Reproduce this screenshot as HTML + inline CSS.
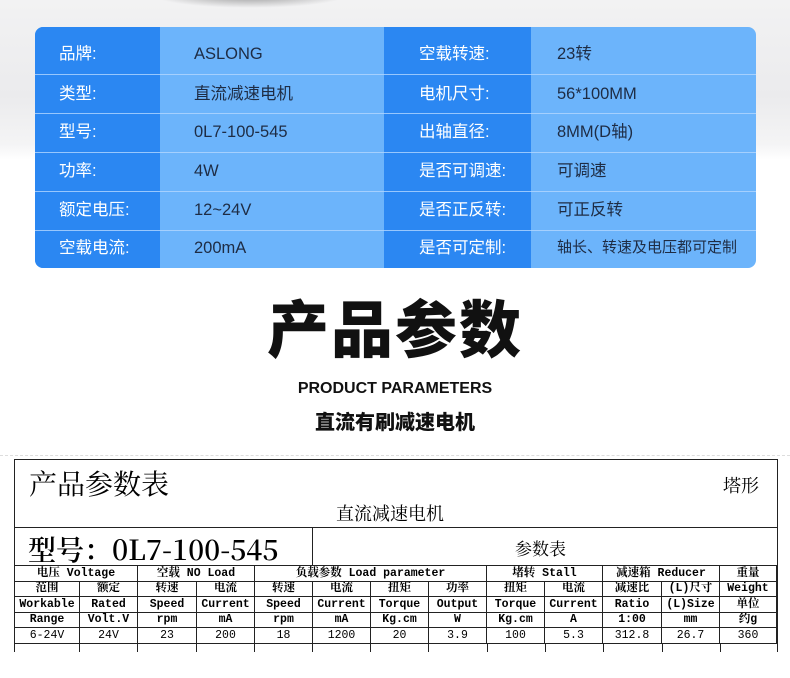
<!DOCTYPE html>
<html><head><meta charset="utf-8"><style>
*{margin:0;padding:0;box-sizing:border-box}
body{width:790px;height:678px;overflow:hidden;background:#fff;position:relative;font-family:"Liberation Sans","Noto Sans CJK SC",sans-serif}
.bg{position:absolute;left:0;top:0;width:790px;height:160px;background:linear-gradient(#f2f2f3,#ebebed 60%,#f4f4f5 90%,#fff)}
.sh{position:absolute;left:150px;top:-20px;width:200px;height:28px;border-radius:50%;background:radial-gradient(ellipse at center,rgba(60,60,60,.55),rgba(120,120,120,0) 70%)}
.card{position:absolute;left:35px;top:27px;width:721px;height:241px;border-radius:8px;overflow:hidden;background:#6cb4fb}
.c{position:absolute;top:0;height:241px}
.row{position:absolute;left:0;width:721px;height:1px;background:rgba(180,215,255,.8)}
.t{position:absolute;font-size:16.5px;line-height:20px}
.l{color:#fff}.v{color:#1e2c44}
.big{position:absolute;left:0;width:790px;text-align:center;font-weight:900;color:#111}
.tb{position:absolute;font-family:"Noto Serif CJK SC","Liberation Serif",serif;color:#000}
table{position:absolute;left:14px;top:565px;border-collapse:collapse;table-layout:fixed;font-family:"Liberation Mono","Noto Serif CJK SC",monospace;font-size:11.5px}
td{border:1.5px solid #222;height:15.5px;text-align:center;padding:0;white-space:nowrap;overflow:hidden;line-height:13px}
.b td{font-weight:bold}
</style></head><body>
<div class="bg"></div><div class="sh"></div>
<div class="card">
<div class="c" style="left:0;width:125px;background:#2b87f2"></div>
<div class="c" style="left:349px;width:147px;background:#2b87f2"></div>
<div class="row" style="top:47px"></div><div class="row" style="top:86px"></div><div class="row" style="top:125px"></div><div class="row" style="top:164px"></div><div class="row" style="top:203px"></div>
<div class="t l" style="left:24px;top:17px">品牌:</div><div class="t v" style="left:159px;top:17px">ASLONG</div>
<div class="t l" style="left:384px;top:17px">空载转速:</div><div class="t v" style="left:522px;top:17px">23转</div>
<div class="t l" style="left:24px;top:57px">类型:</div><div class="t v" style="left:159px;top:57px">直流减速电机</div>
<div class="t l" style="left:384px;top:57px">电机尺寸:</div><div class="t v" style="left:522px;top:57px">56*100MM</div>
<div class="t l" style="left:24px;top:95px">型号:</div><div class="t v" style="left:159px;top:95px">0L7-100-545</div>
<div class="t l" style="left:384px;top:95px">出轴直径:</div><div class="t v" style="left:522px;top:95px">8MM(D轴)</div>
<div class="t l" style="left:24px;top:134px">功率:</div><div class="t v" style="left:159px;top:134px">4W</div>
<div class="t l" style="left:384px;top:134px">是否可调速:</div><div class="t v" style="left:522px;top:134px">可调速</div>
<div class="t l" style="left:24px;top:173px">额定电压:</div><div class="t v" style="left:159px;top:173px">12~24V</div>
<div class="t l" style="left:384px;top:173px">是否正反转:</div><div class="t v" style="left:522px;top:173px">可正反转</div>
<div class="t l" style="left:24px;top:211px">空载电流:</div><div class="t v" style="left:159px;top:211px">200mA</div>
<div class="t l" style="left:384px;top:211px">是否可定制:</div><div class="t v" style="left:522px;top:211px;font-size:15px">轴长、转速及电压都可定制</div>
</div>
<div class="big" style="top:294px;font-size:62px;line-height:76px;letter-spacing:2px">产品参数</div>
<div class="big" style="top:379px;font-size:16px;line-height:20px">PRODUCT PARAMETERS</div>
<div class="big" style="top:410px;font-size:20px;line-height:26px">直流有刷减速电机</div>
<div style="position:absolute;left:0;top:455px;width:790px;border-top:1px dashed #ddd"></div>
<div style="position:absolute;left:14px;top:459px;width:764px;height:193px;border:1.5px solid #222;border-bottom:none"></div>
<div style="position:absolute;left:14px;top:527px;width:764px;border-top:1.5px solid #222"></div>
<div style="position:absolute;left:312px;top:527px;height:39px;border-left:1.5px solid #222"></div>
<div class="tb" style="left:29px;top:466px;font-size:28px;line-height:34px">产品参数表</div>
<div class="tb" style="left:723px;top:474px;font-size:18px;line-height:22px">塔形</div>
<div class="tb" style="left:336px;top:502px;font-size:18px;line-height:22px">直流减速电机</div>
<div class="tb" style="left:28px;top:532px;font-size:28px;line-height:34px;font-weight:600">型号：0L7-100-545</div>
<div class="tb" style="left:515px;top:537px;font-size:17px;line-height:22px">参数表</div>
<table>
<colgroup><col style="width:65px"><col style="width:58px"><col style="width:59px"><col style="width:58px"><col style="width:58px"><col style="width:58px"><col style="width:58px"><col style="width:58px"><col style="width:58px"><col style="width:58px"><col style="width:59px"><col style="width:58px"><col style="width:57px"></colgroup>
<tr class="b"><td colspan="2">电压 Voltage</td><td colspan="2">空载 NO Load</td><td colspan="4">负载参数 Load parameter</td><td colspan="2">堵转 Stall</td><td colspan="2">减速箱 Reducer</td><td>重量</td></tr>
<tr class="b"><td>范围</td><td>额定</td><td>转速</td><td>电流</td><td>转速</td><td>电流</td><td>扭矩</td><td>功率</td><td>扭矩</td><td>电流</td><td>减速比</td><td>(L)尺寸</td><td>Weight</td></tr>
<tr class="b"><td>Workable</td><td>Rated</td><td>Speed</td><td>Current</td><td>Speed</td><td>Current</td><td>Torque</td><td>Output</td><td>Torque</td><td>Current</td><td>Ratio</td><td>(L)Size</td><td>单位</td></tr>
<tr class="b"><td>Range</td><td>Volt.V</td><td>rpm</td><td>mA</td><td>rpm</td><td>mA</td><td>Kg.cm</td><td>W</td><td>Kg.cm</td><td>A</td><td>1:00</td><td>mm</td><td>约g</td></tr>
<tr><td>6-24V</td><td>24V</td><td>23</td><td>200</td><td>18</td><td>1200</td><td>20</td><td>3.9</td><td>100</td><td>5.3</td><td>312.8</td><td>26.7</td><td>360</td></tr>
</table>
<div style="position:absolute;left:14px;top:643px;width:764px;height:9px;background:repeating-linear-gradient(90deg,transparent 0,transparent 0)"></div>
<div style="position:absolute;top:643px;height:9px;left:14px;border-left:1.5px solid #222"></div>
<div style="position:absolute;top:643px;height:9px;left:79px;border-left:1.5px solid #222"></div>
<div style="position:absolute;top:643px;height:9px;left:137px;border-left:1.5px solid #222"></div>
<div style="position:absolute;top:643px;height:9px;left:196px;border-left:1.5px solid #222"></div>
<div style="position:absolute;top:643px;height:9px;left:254px;border-left:1.5px solid #222"></div>
<div style="position:absolute;top:643px;height:9px;left:312px;border-left:1.5px solid #222"></div>
<div style="position:absolute;top:643px;height:9px;left:370px;border-left:1.5px solid #222"></div>
<div style="position:absolute;top:643px;height:9px;left:428px;border-left:1.5px solid #222"></div>
<div style="position:absolute;top:643px;height:9px;left:487px;border-left:1.5px solid #222"></div>
<div style="position:absolute;top:643px;height:9px;left:545px;border-left:1.5px solid #222"></div>
<div style="position:absolute;top:643px;height:9px;left:603px;border-left:1.5px solid #222"></div>
<div style="position:absolute;top:643px;height:9px;left:662px;border-left:1.5px solid #222"></div>
<div style="position:absolute;top:643px;height:9px;left:720px;border-left:1.5px solid #222"></div>
</body></html>
